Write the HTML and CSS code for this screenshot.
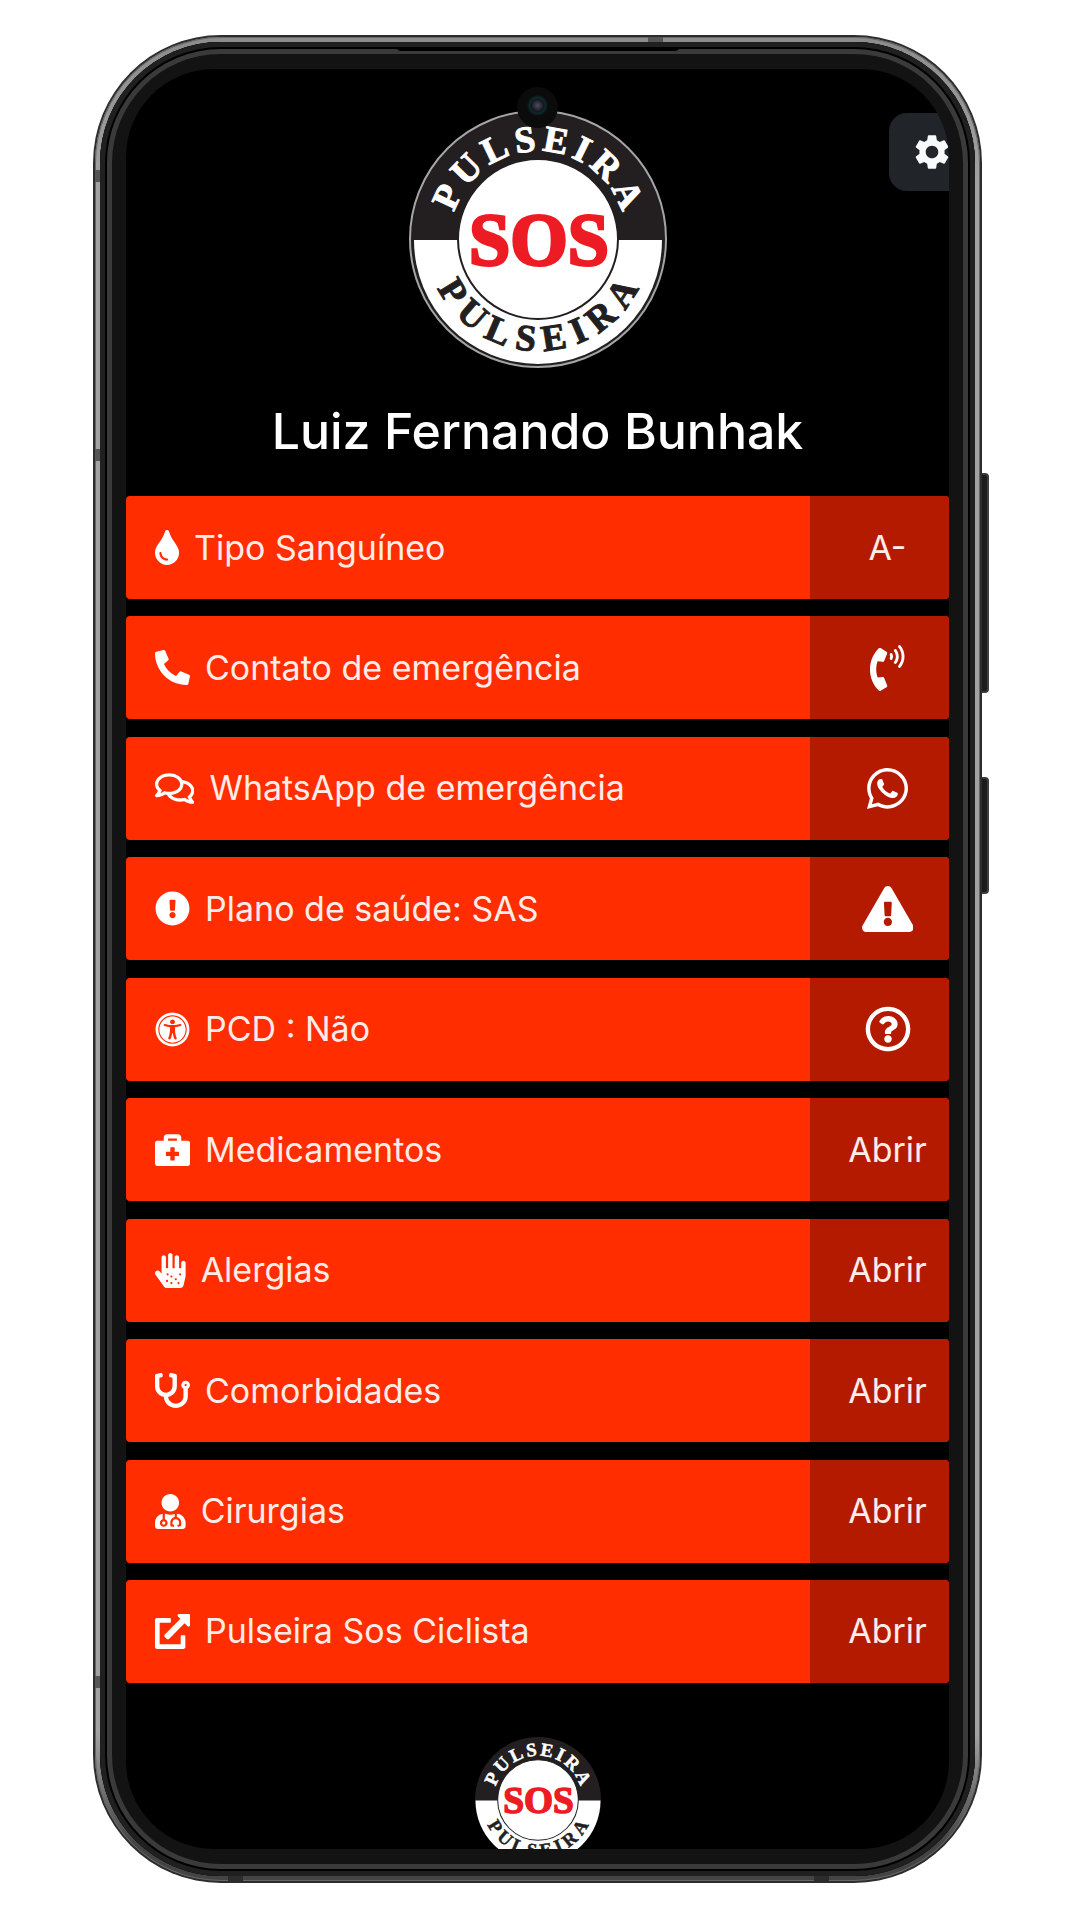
FILE: index.html
```html
<!DOCTYPE html>
<html lang="pt-BR">
<head>
<meta charset="utf-8">
<meta name="viewport" content="width=device-width, initial-scale=1">
<title>Pulseira SOS</title>
<link rel="stylesheet" href="styles.css">
</head>
<body>
<svg class="defs" aria-hidden="true">
  <defs>
    <path id="arc-top" d="M41 129a88 88 0 0 1 176 0"/>
    <path id="arc-bottom" d="M17 129a112 112 0 0 0 224 0"/>
    <symbol id="seal" viewBox="0 0 250 250">
      <g transform="translate(-4 -4)">
        <circle cx="129" cy="129" r="125" fill="#231f20"/>
        <path d="M5 130a124 124 0 0 0 248 0z" fill="#fff"/>
        <circle cx="129" cy="129" r="80" fill="#fff" stroke="#231f20" stroke-width="2"/>
        <text class="seal-ring" fill="#fff" stroke="#fff" text-anchor="middle" dx="0 5 5 5 5 5 5 5"><textPath href="#arc-top" startOffset="50%">PULSEIRA</textPath></text>
        <text class="seal-ring" fill="#231f20" stroke="#231f20" text-anchor="middle" dx="0 9 9 9 9 9 9 9"><textPath href="#arc-bottom" startOffset="50%">PULSEIRA</textPath></text>
        <text class="seal-sos" x="130" y="155" fill="#ed1c24" stroke="#ed1c24" text-anchor="middle">SOS</text>
      </g>
    </symbol>
  </defs>
</svg>

<div class="phone">
  <span class="key key-volume"></span>
  <span class="key key-power"></span>
  <div class="rim">
    <span class="band band-left-1"></span>
    <span class="band band-left-2"></span>
    <span class="band band-left-3"></span>
    <span class="band band-top"></span>
    <span class="band band-bottom-1"></span>
    <span class="band band-bottom-2"></span>
    <div class="bezel">
      <span class="earpiece"></span>
      <div class="screen">
        <span class="camera"></span>
        <button class="settings" type="button" aria-label="Configurações">
          <svg viewBox="0 0 24 24"><path d="M19.14 12.94c.04-.3.06-.61.06-.94 0-.32-.02-.64-.07-.94l2.03-1.58a.49.49 0 0 0 .12-.61l-1.92-3.32a.488.488 0 0 0-.59-.22l-2.39.96c-.5-.38-1.03-.7-1.62-.94l-.36-2.54a.484.484 0 0 0-.48-.41h-3.84c-.24 0-.43.17-.47.41l-.36 2.54c-.59.24-1.13.57-1.62.94l-2.39-.96c-.22-.08-.47 0-.59.22L2.74 8.87c-.12.21-.08.47.12.61l2.03 1.58c-.05.3-.09.63-.09.94s.02.64.07.94l-2.03 1.58a.49.49 0 0 0-.12.61l1.92 3.32c.12.22.37.29.59.22l2.39-.96c.5.38 1.03.7 1.62.94l.36 2.54c.05.24.24.41.48.41h3.84c.24 0 .44-.17.47-.41l.36-2.54c.59-.24 1.13-.56 1.62-.94l2.39.96c.22.08.47 0 .59-.22l1.92-3.32c.12-.22.07-.47-.12-.61l-2.01-1.58zM12 15.6c-1.98 0-3.6-1.62-3.6-3.6s1.62-3.6 3.6-3.6 3.6 1.62 3.6 3.6-1.62 3.6-3.6 3.6z"/></svg>
        </button>

        <header class="profile">
          <svg class="logo" viewBox="0 0 258 258" role="img" aria-label="Pulseira SOS">
            <circle cx="129" cy="129" r="128" fill="#231f20" stroke="#a5a5a5" stroke-width="2"/>
            <use href="#seal" x="4" y="4" width="250" height="250"/>
          </svg>
          <h1 class="name">Luiz Fernando Bunhak</h1>
        </header>

        <ul class="rows">
          <li class="row">
            <span class="label"><svg class="icon" viewBox="0 0 352 512"><path d="M205.22 22.09c-7.94-28.78-49.44-30.12-58.44 0C100.01 179.85 0 222.72 0 333.91 0 432.35 78.72 512 176 512s176-79.65 176-178.09c0-111.75-99.79-153.34-146.78-311.82zM176 448c-61.75 0-112-50.25-112-112 0-8.84 7.16-16 16-16s16 7.16 16 16c0 44.11 35.89 80 80 80 8.84 0 16 7.16 16 16s-7.16 16-16 16z"/></svg>Tipo Sanguíneo</span>
            <span class="action">A-</span>
          </li>
          <li class="row">
            <span class="label"><svg class="icon" viewBox="0 0 512 512"><path d="M497.39 361.8l-112-48a24 24 0 0 0-28 6.9l-49.6 60.6A370.66 370.66 0 0 1 130.6 204.11l60.6-49.6a23.94 23.94 0 0 0 6.9-28l-48-112A24.16 24.16 0 0 0 122.6.61l-104 24A24 24 0 0 0 0 48c0 256.5 207.9 464 464 464a24 24 0 0 0 23.4-18.6l24-104a24.29 24.29 0 0 0-14.01-27.6z"/></svg>Contato de emergência</span>
            <a class="action" href="#ligar" aria-label="Ligar"><svg class="glyph glyph-tall" viewBox="0 0 384 512"><path d="M97.333 506.966c-129.874-129.874-129.681-340.252 0-469.933 5.698-5.698 14.527-6.632 21.263-2.422l64.817 40.513a17.187 17.187 0 0 1 6.849 20.958l-32.408 81.021a17.188 17.188 0 0 1-17.669 10.719l-55.81-5.58c-21.051 58.261-20.612 122.471 0 179.515l55.811-5.581a17.188 17.188 0 0 1 17.669 10.719l32.408 81.022a17.188 17.188 0 0 1-6.849 20.958l-64.817 40.513a17.19 17.19 0 0 1-21.264-2.422zM247.126 95.473c11.832 20.047 11.832 45.008 0 65.055-3.95 6.693-13.108 7.959-18.718 2.581l-5.975-5.726c-3.911-3.748-4.793-9.622-2.261-14.41a32.063 32.063 0 0 0 0-29.945c-2.533-4.788-1.65-10.662 2.261-14.41l5.975-5.726c5.61-5.378 14.768-4.112 18.718 2.581zm91.787-91.187c60.14 71.604 60.092 175.882 0 247.428-4.474 5.327-12.53 5.746-17.552.933l-5.798-5.557c-4.56-4.371-4.977-11.529-.93-16.379 49.687-59.538 49.646-145.933 0-205.422-4.047-4.85-3.631-12.008.93-16.379l5.798-5.557c5.022-4.813 13.078-4.394 17.552.933zm-45.972 44.941c36.05 46.322 36.108 111.149 0 157.546-4.39 5.641-12.697 6.251-17.856 1.304l-5.818-5.579c-4.4-4.219-4.998-11.095-1.285-15.931 26.536-34.564 26.534-82.572 0-117.134-3.713-4.836-3.115-11.711 1.285-15.931l5.818-5.579c5.159-4.947 13.466-4.337 17.856 1.304z"/></svg></a>
          </li>
          <li class="row">
            <span class="label"><svg class="icon" viewBox="0 0 576 512"><path d="M532 386.2c27.5-27.1 44-61.1 44-98.2 0-80-76.5-146.1-176.2-157.9C368.3 72.5 294.3 32 208 32 93.1 32 0 103.6 0 192c0 37 16.5 71 44 98.2-15.3 30.7-37.3 54.5-37.7 54.9-6.3 6.7-8.1 16.5-4.4 25 3.6 8.5 12 14 21.2 14 53.5 0 96.7-20.2 125.2-38.8 9.2 2.1 18.7 3.7 28.4 4.9C208.1 407.6 281.8 448 368 448c20.8 0 40.8-2.4 59.8-6.8C456.3 459.7 499.4 480 553 480c9.2 0 17.5-5.5 21.2-14 3.6-8.5 1.9-18.3-4.4-25-.4-.3-22.5-24.1-37.8-54.8zm-392.8-92.3L122.1 305c-14.1 9.1-28.5 16.3-43.1 21.4 2.7-4.7 5.4-9.7 8-14.8l15.5-31.1L77.7 256C64.2 242.6 48 220.7 48 192c0-60.7 73.3-112 160-112s160 51.3 160 112-73.3 112-160 112c-16.5 0-33-1.9-49-5.6l-19.8-4.5zM498.3 352l-24.7 24.4 15.5 31.1c2.6 5.1 5.3 10.1 8 14.8-14.6-5.1-29-12.3-43.1-21.4l-17.1-11.1-19.9 4.6c-16 3.7-32.5 5.6-49 5.6-54 0-102.2-20.1-131.3-49.7C338 339.5 416 272.9 416 192c0-3.4-.4-6.7-.7-10C479.7 196.5 528 238.8 528 288c0 28.7-16.2 50.6-29.7 64z"/></svg>WhatsApp de emergência</span>
            <a class="action" href="#whatsapp" aria-label="WhatsApp"><svg class="glyph glyph-chat" viewBox="0 32 448 448"><path d="M380.9 97.1C339 55.1 283.2 32 223.9 32c-122.4 0-222 99.6-222 222 0 39.1 10.2 77.3 29.6 111L0 480l117.7-30.9c32.4 17.7 68.9 27 106.1 27h.1c122.3 0 224.1-99.6 224.1-222 0-59.3-25.2-115-67.1-157zm-157 341.6c-33.2 0-65.7-8.9-94-25.7l-6.7-4-69.8 18.3L72 359.2l-4.4-7c-18.5-29.4-28.2-63.3-28.2-98.2 0-101.7 82.8-184.5 184.6-184.5 49.3 0 95.6 19.2 130.4 54.1 34.8 34.9 56.2 81.2 56.1 130.5 0 101.8-84.9 184.6-186.6 184.6zm101.2-138.2c-5.5-2.8-32.8-16.2-37.9-18-5.1-1.9-8.8-2.8-12.5 2.8-3.7 5.6-14.3 18-17.6 21.8-3.2 3.7-6.5 4.2-12 1.4-32.6-16.3-54-29.1-75.5-66-5.7-9.8 5.7-9.1 16.3-30.3 1.8-3.7.9-6.9-.5-9.7-1.4-2.8-12.5-30.1-17.1-41.2-4.5-10.8-9.1-9.3-12.5-9.5-3.2-.2-6.9-.2-10.6-.2-3.7 0-9.7 1.4-14.8 6.9-5.1 5.6-19.4 19-19.4 46.3 0 27.3 19.9 53.7 22.6 57.4 2.8 3.7 39.1 59.7 94.8 83.8 35.2 15.2 49 16.5 66.6 13.9 10.7-1.6 32.8-13.4 37.4-26.4 4.6-13 4.6-24.1 3.2-26.4-1.3-2.5-5-3.9-10.5-6.6z"/></svg></a>
          </li>
          <li class="row">
            <span class="label"><svg class="icon" viewBox="0 0 512 512"><path d="M504 256c0 136.997-111.043 248-248 248S8 392.997 8 256C8 119.083 119.043 8 256 8s248 111.083 248 248zm-248 50c-25.405 0-46 20.595-46 46s20.595 46 46 46 46-20.595 46-46-20.595-46-46-46zm-43.673-165.346l7.418 136c.347 6.364 5.609 11.346 11.982 11.346h48.546c6.373 0 11.635-4.982 11.982-11.346l7.418-136c.375-6.874-5.098-12.654-11.982-12.654h-63.383c-6.884 0-12.356 5.78-11.981 12.654z"/></svg>Plano de saúde: SAS</span>
            <span class="action"><svg class="glyph glyph-tall" viewBox="0 0 576 512"><path d="M569.517 440.013C587.975 472.007 564.806 512 527.94 512H48.054c-36.937 0-59.999-40.055-41.577-71.987L246.423 23.985c18.467-32.009 64.72-31.951 83.154 0l239.94 416.028zM288 354c-25.405 0-46 20.595-46 46s20.595 46 46 46 46-20.595 46-46-20.595-46-46-46zm-43.673-165.346l7.418 136c.347 6.364 5.609 11.346 11.982 11.346h48.546c6.373 0 11.635-4.982 11.982-11.346l7.418-136c.375-6.874-5.098-12.654-11.982-12.654h-63.383c-6.884 0-12.356 5.78-11.981 12.654z"/></svg></span>
          </li>
          <li class="row">
            <span class="label"><svg class="icon" viewBox="0 0 512 512"><path d="M256 48c114.953 0 208 93.029 208 208 0 114.953-93.029 208-208 208-114.953 0-208-93.029-208-208 0-114.953 93.029-208 208-208m0-40C119.033 8 8 119.033 8 256s111.033 248 248 248 248-111.033 248-248S392.967 8 256 8zm0 56C149.961 64 64 149.961 64 256s85.961 192 192 192 192-85.961 192-192S362.039 64 256 64zm0 44c19.882 0 36 16.118 36 36s-16.118 36-36 36-36-16.118-36-36 16.118-36 36-36zm117.741 98.023c-28.712 6.779-55.511 12.748-82.14 15.807.851 101.023 12.306 123.052 25.037 155.621 3.617 9.26-.957 19.698-10.217 23.315-9.261 3.617-19.699-.957-23.316-10.217-8.705-22.308-17.086-40.636-22.261-78.549h-9.686c-5.167 37.851-13.534 56.208-22.262 78.549-3.615 9.255-14.05 13.836-23.315 10.217-9.26-3.617-13.834-14.056-10.217-23.315 12.713-32.541 24.185-54.541 25.037-155.621-26.629-3.058-53.428-9.027-82.141-15.807-8.6-2.031-13.926-10.648-11.895-19.249s10.647-13.926 19.249-11.895c96.686 22.829 124.283 22.783 220.775 0 8.599-2.03 17.218 3.294 19.249 11.895 2.029 8.601-3.297 17.219-11.897 19.249z" fill-rule="evenodd"/></svg>PCD : Não</span>
            <span class="action"><svg class="glyph glyph-tall" viewBox="0 0 512 512"><path d="M256 8C119.043 8 8 119.083 8 256c0 136.997 111.043 248 248 248s248-111.003 248-248C504 119.083 392.957 8 256 8zm0 448c-110.532 0-200-89.431-200-200 0-110.495 89.472-200 200-200 110.491 0 200 89.471 200 200 0 110.53-89.431 200-200 200zm107.244-255.2c0 67.052-72.421 68.084-72.421 92.863V300c0 6.627-5.373 12-12 12h-45.647c-6.627 0-12-5.373-12-12v-8.659c0-35.745 27.1-50.034 47.579-61.516 17.561-9.845 28.324-16.541 28.324-29.579 0-17.246-21.999-28.693-39.784-28.693-23.189 0-33.894 10.977-48.942 29.969-4.057 5.12-11.46 6.071-16.666 2.124l-27.824-21.098c-5.107-3.872-6.251-11.066-2.644-16.363C184.846 131.491 214.94 112 261.794 112c49.071 0 101.45 38.304 101.45 88.8zM298 368c0 23.159-18.841 42-42 42s-42-18.841-42-42 18.841-42 42-42 42 18.841 42 42z"/></svg></span>
          </li>
          <li class="row">
            <span class="label"><svg class="icon" viewBox="0 0 512 512"><path d="M480 128h-96V80c0-26.5-21.5-48-48-48H176c-26.5 0-48 21.5-48 48v48H32c-17.600 0-32 14.400-32 32v304c0 17.600 14.400 32 32 32h448c17.600 0 32-14.400 32-32V160c0-17.600-14.400-32-32-32zM192 96h128v32H192V96zm160 248c0 4.400-3.600 8-8 8h-56v56c0 4.400-3.600 8-8 8h-48c-4.400 0-8-3.600-8-8v-56h-56c-4.400 0-8-3.600-8-8v-48c0-4.400 3.600-8 8-8h56v-56c0-4.400 3.600-8 8-8h48c4.400 0 8 3.600 8 8v56h56c4.400 0 8 3.600 8 8v48z"/></svg>Medicamentos</span>
            <button class="action" type="button">Abrir</button>
          </li>
          <li class="row">
            <span class="label"><svg class="icon" viewBox="0 0 448 512"><path d="M416 112c-17.600 0-32 14.400-32 32v72c0 4.400-3.600 8-8 8h-16c-4.400 0-8-3.600-8-8V64c0-17.600-14.400-32-32-32s-32 14.400-32 32v152c0 4.400-3.600 8-8 8h-16c-4.400 0-8-3.600-8-8V32c0-17.600-14.400-32-32-32s-32 14.400-32 32v184c0 4.400-3.600 8-8 8h-16c-4.400 0-8-3.600-8-8V64c0-17.600-14.400-32-32-32S96 46.400 96 64v241l-23.600-32.500c-13-17.900-38-21.800-55.900-8.800S-5.200 301.700 7.800 319.600l125.600 172.700c9 12.400 23.500 19.700 38.800 19.700h197.600c22.300 0 41.600-15.300 46.700-37l26.500-112.700c3.200-13.700 4.900-28.300 5-42.300V144c0-17.600-14.400-32-32-32z"/><g class="spots"><circle cx="184" cy="312" r="16"/><circle cx="176" cy="408" r="16"/><circle cx="240" cy="344" r="16"/><circle cx="240" cy="440" r="16"/><circle cx="304" cy="384" r="16"/><circle cx="368" cy="312" r="16"/><circle cx="344" cy="440" r="16"/></g></svg>Alergias</span>
            <button class="action" type="button">Abrir</button>
          </li>
          <li class="row">
            <span class="label"><svg class="icon" viewBox="0 0 512 512"><path d="M447.100 112c-34.200.5-62.300 28.400-63 62.600-.5 24.300 12.500 45.600 32 56.800V344c0 57.300-50.200 104-112 104-60 0-109.200-44.100-111.900-99.200C265 333.800 320 269.200 320 192V36.600c0-11.400-8.100-21.300-19.300-23.500L237.800.5c-13-2.600-25.600 5.800-28.200 18.800L206.400 35c-2.600 13 5.800 25.600 18.800 28.200l30.700 6.100v121.400c0 52.900-42.200 96.700-95.100 97.200-53.400.5-96.900-42.700-96.900-96V69.400l30.700-6.100c13-2.600 21.400-15.200 18.800-28.200l-3.100-15.700C107.700 6.400 95.100-2 82.100.6L19.300 13C8.100 15.300 0 25.100 0 36.600V192c0 77.300 55.100 142 128.100 156.800C130.700 439.200 208.600 512 304 512c97 0 176-75.400 176-168V231.400c19.100-11.100 32-31.700 32-55.400 0-35.700-29.200-64.500-64.900-64zm.9 80c-8.800 0-16-7.200-16-16s7.200-16 16-16 16 7.200 16 16-7.200 16-16 16z"/></svg>Comorbidades</span>
            <button class="action" type="button">Abrir</button>
          </li>
          <li class="row">
            <span class="label"><svg class="icon" viewBox="0 0 448 512"><path d="M224 256c70.700 0 128-57.300 128-128S294.700 0 224 0 96 57.300 96 128s57.300 128 128 128zM104 424c0 13.300 10.700 24 24 24s24-10.700 24-24-10.700-24-24-24-24 10.700-24 24zm216-135.400v49c36.500 7.400 64 39.800 64 78.400v41.700c0 7.600-5.400 14.200-12.900 15.700l-32.200 6.400c-4.300.9-8.500-1.900-9.400-6.300l-3.100-15.700c-.9-4.300 1.900-8.600 6.300-9.400l19.300-3.900V416c0-62.800-96-65.100-96 1.900v26.700l19.300 3.900c4.300.9 7.100 5.100 6.300 9.400l-3.100 15.700c-.9 4.300-5.100 7.100-9.400 6.300l-31.200-4.200c-7.900-1.100-13.800-7.800-13.800-15.900V416c0-38.600 27.500-70.900 64-78.400v-45.200c-2.200.7-4.400 1.100-6.600 1.900-18 6.300-37.300 9.800-57.400 9.800s-39.400-3.500-57.400-9.800c-7.400-2.600-14.900-4.200-22.600-5.200v81.600c23.100 6.900 40 28.100 40 53.400 0 30.900-25.100 56-56 56s-56-25.100-56-56c0-25.300 16.900-46.500 40-53.400v-80.400C48.500 301 0 355.800 0 422.400v44.800C0 491.900 20.100 512 44.800 512h358.400c24.700 0 44.800-20.100 44.800-44.800v-44.800c0-72-56.800-130.300-128-133.800z"/></svg>Cirurgias</span>
            <button class="action" type="button">Abrir</button>
          </li>
          <li class="row">
            <span class="label"><svg class="icon" viewBox="0 0 512 512"><path d="M216 60H28C12 60 0 72 0 88v396c0 16 12 28 28 28h388c16 0 28-12 28-28V328c0-9-7-16-16-16h-36c-9 0-16 7-16 16v116H68V128h148c9 0 16-7 16-16V76c0-9-7-16-16-16z"/><path d="M496 0H350c-18 0-27 22-14 35l36 36-228 228c-12 12-12 26-3 35l30 30c9 9 24 9 34 0l228-228 44 44c13 13 35 4 35-14V16c0-9-7-16-16-16z"/></svg>Pulseira Sos Ciclista</span>
            <button class="action" type="button">Abrir</button>
          </li>
        </ul>

        <footer class="foot">
          <svg class="logo-small" viewBox="0 0 250 250" role="img" aria-label="Pulseira SOS"><use href="#seal" width="250" height="250"/></svg>
        </footer>
      </div>
    </div>
  </div>
</div>
</body>
</html>
```
FILE: styles.css
```css
* {
  box-sizing: border-box;
}

body {
  margin: 0;
  padding: 35px 98px 38px 93px;
  background: #fff;
  font-family: Inter, "Liberation Sans", sans-serif;
  color: #fff;
}

.defs {
  position: absolute;
  width: 0;
  height: 0;
}

/* Device frame */
.phone {
  position: relative;
  padding: 2px;
  border-radius: 128px;
  background: #2c2c2c;
}

.rim {
  position: relative;
  padding: 5px;
  border-radius: 126px;
  background: linear-gradient(#8c8c8c 0, #a2a2a2 8%, #a2a2a2 92%, #444 98%);
  box-shadow: inset 0 0 0 1px #666;
}

.bezel {
  position: relative;
  padding: 27px 26px;
  border-radius: 121px;
  background: #131313;
  box-shadow: inset 0 0 0 5px #202020, inset 0 0 0 7px #000, inset 0 0 0 12px #3a3a3a;
}

.key {
  position: absolute;
  left: 100%;
  width: 7px;
  border: 2px solid #3d3d3d;
  border-left: 0;
  border-radius: 0 4px 4px 0;
  background: #1c1c1c;
}

.key-volume {
  top: 438px;
  height: 220px;
}

.key-power {
  top: 742px;
  height: 117px;
}

.band {
  position: absolute;
  background: #555;
}

.band-left-1,
.band-left-2,
.band-left-3 {
  left: 0;
  width: 5px;
  height: 12px;
}

.band-left-1 {
  top: 133px;
}

.band-left-2 {
  top: 412px;
}

.band-left-3 {
  bottom: 193px;
}

.band-top,
.band-bottom-1,
.band-bottom-2 {
  width: 15px;
  height: 5px;
}

.band-top {
  top: 0;
  left: 553px;
}

.band-bottom-1,
.band-bottom-2 {
  bottom: 0;
  background: #2c2c2c;
}

.band-bottom-1 {
  left: 133px;
}

.band-bottom-2 {
  right: 151px;
}

.earpiece {
  position: absolute;
  top: 5px;
  left: 50%;
  width: 282px;
  height: 4px;
  margin-left: -141px;
  border-radius: 0 0 4px 4px;
  background: #000;
}

/* Screen */
.screen {
  position: relative;
  overflow: hidden;
  padding-top: 41px;
  border-radius: 88px;
  background: #000;
}

.camera {
  position: absolute;
  top: 18px;
  left: 50%;
  width: 41px;
  height: 41px;
  margin-left: -21px;
  border-radius: 50%;
  background: radial-gradient(circle at 50% 45%, #4a4c62 0, #2a2b35 4px, #14181a 6px, #0e2a2c 8px, #0b1213 10px, #0b0b0b 11px);
}

.settings {
  position: absolute;
  top: 44px;
  right: -22px;
  display: flex;
  align-items: center;
  width: 82px;
  height: 78px;
  padding: 0 0 0 22px;
  border: 0;
  border-radius: 18px;
  background: #212529;
}

.settings svg {
  width: 42px;
  height: 42px;
  fill: #f8f9fa;
}

.profile {
  display: flex;
  flex-direction: column;
  align-items: center;
  gap: 33px;
}

.logo {
  width: 258px;
  height: 258px;
}

.seal-ring {
  font: bold 37px "Liberation Serif", serif;
  stroke-width: 1px;
}

.seal-sos {
  font: bold 74px "Liberation Serif", serif;
  stroke-width: 3px;
}

.name {
  margin: 0;
  font-size: 50px;
  font-weight: 500;
  line-height: 60px;
}

/* Information rows */
.rows {
  display: flex;
  flex-direction: column;
  justify-content: space-between;
  min-height: 1187px;
  margin: 35px 0 0;
  padding: 0;
  list-style: none;
}

.row {
  display: flex;
  min-height: 103px;
  overflow: hidden;
  border-radius: 4px;
  background: #ff2d00;
}

.label,
.action {
  font-size: 34px;
  font-weight: 400;
  line-height: 42px;
  color: #ffece8;
}

.label {
  display: flex;
  flex: 1;
  align-items: center;
  gap: 15px;
  padding-left: 29px;
}

.icon {
  height: 35px;
  fill: #fff;
}

.spots {
  fill: #ff2d00;
}

.action {
  display: flex;
  align-items: center;
  justify-content: center;
  width: 139px;
  padding: 0 0 0 16px;
  border: 0;
  background: #b41a00;
  font-family: inherit;
  text-decoration: none;
}

.glyph {
  fill: #fff;
}

.glyph-tall {
  height: 46px;
}

.glyph-chat {
  height: 41px;
}

/* Footer logo runs past the bottom edge of the screen */
.foot {
  display: flex;
  justify-content: center;
  height: 166px;
  padding-top: 54px;
}

.logo-small {
  flex: none;
  width: 126px;
  height: 126px;
}
```
